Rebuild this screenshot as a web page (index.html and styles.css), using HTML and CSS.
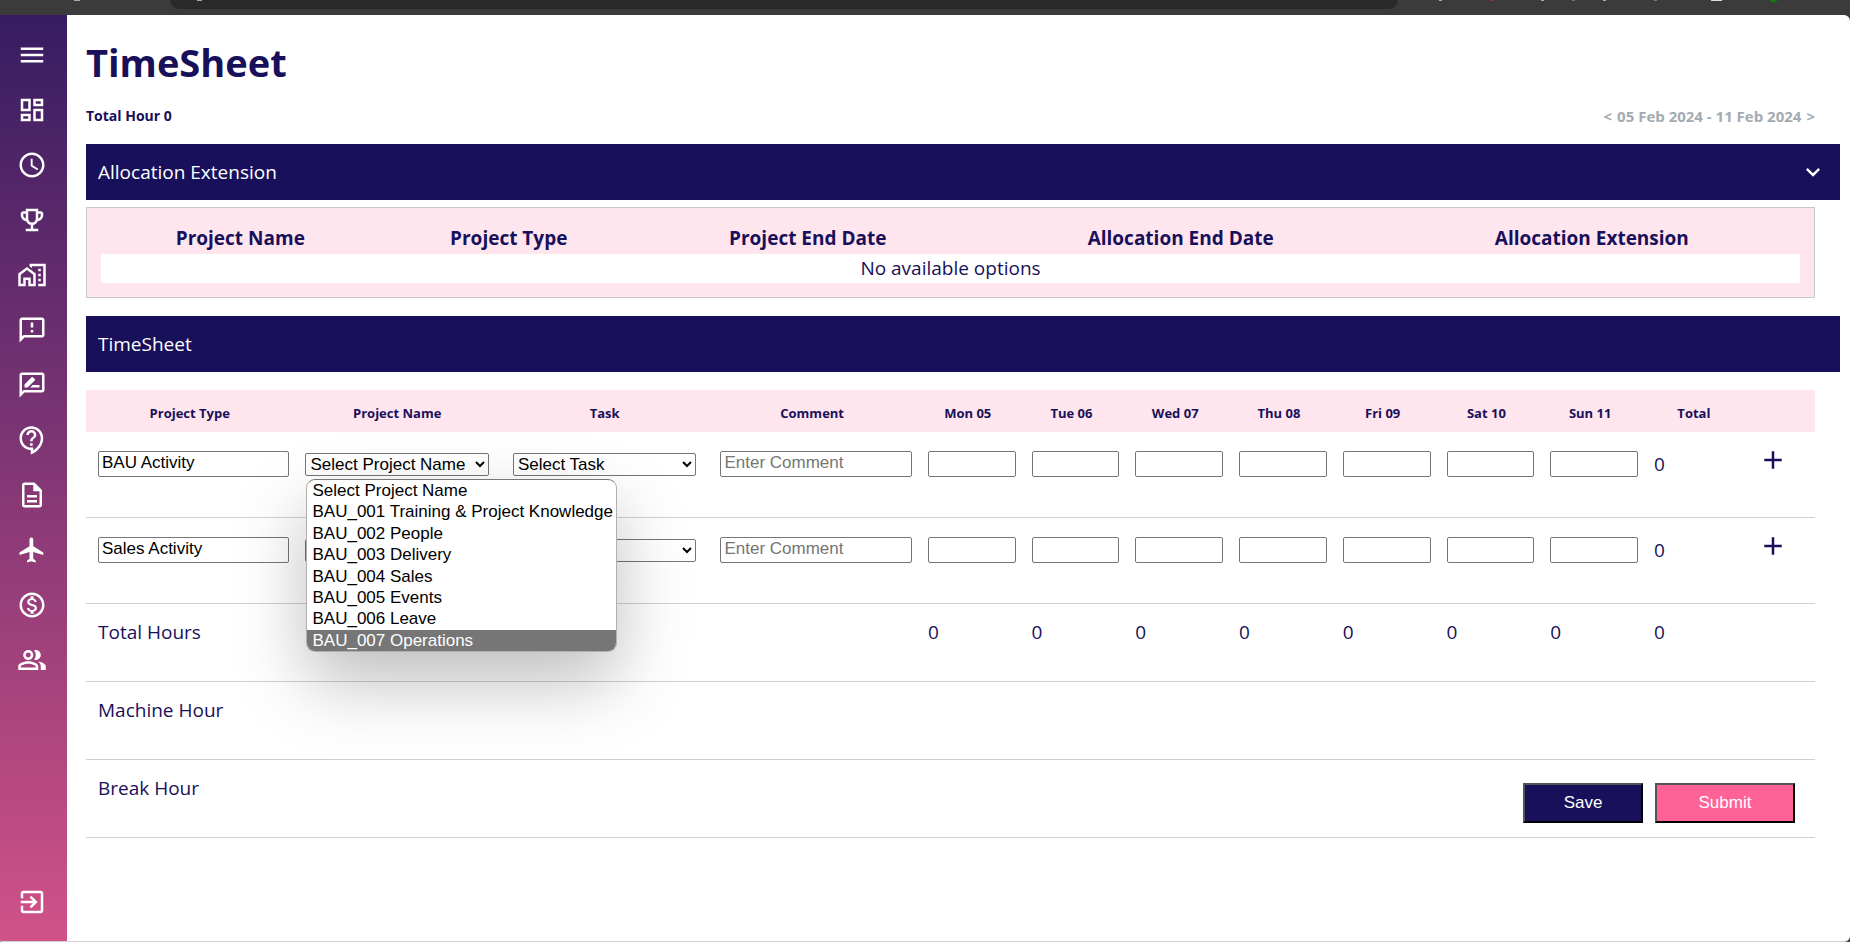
FILE: index.html
```html
<!DOCTYPE html>
<html lang="en">
<head>
<meta charset="utf-8">
<title>TimeSheet</title>
<link rel="stylesheet" href="styles.css">
</head>
<body>
<div class="chrome"><i class="tool"></i><div class="chrome-field"><i></i></div><div class="chrome-icons"><i></i><i class="red"></i><i></i><i class="dim"></i><i></i><i class="dim"></i><i class="wide"></i><i class="green"></i></div></div>
<div class="app">
  <nav class="sidebar" aria-label="Main">
    <button class="nav-item" aria-label="Menu"><svg class="icon" viewBox="0 0 24 24"><path d="M3 18h18v-2H3v2zm0-5h18v-2H3v2zm0-7v2h18V6H3z"/></svg></button>
    <a class="nav-item" href="#" aria-label="Dashboard"><svg class="icon" viewBox="0 0 24 24"><path d="M19 5v2h-4V5h4M9 5v6H5V5h4m10 8v6h-4v-6h4M9 17v2H5v-2h4M21 3h-8v6h8V3zM11 3H3v10h8V3zm10 8h-8v10h8V11zm-10 4H3v6h8v-6z"/></svg></a>
    <a class="nav-item" href="#" aria-label="Timesheet"><svg class="icon" viewBox="0 0 24 24"><path d="M11.99 2C6.47 2 2 6.48 2 12s4.47 10 9.99 10C17.52 22 22 17.52 22 12S17.52 2 11.99 2zM12 20c-4.42 0-8-3.58-8-8s3.58-8 8-8 8 3.58 8 8-3.58 8-8 8zm.5-13H11v6l5.25 3.15.75-1.23-4.5-2.67z"/></svg></a>
    <a class="nav-item" href="#" aria-label="Awards"><svg class="icon" viewBox="0 0 24 24"><path d="M19 5h-2V3H7v2H5c-1.1 0-2 .9-2 2v1c0 2.55 1.92 4.63 4.39 4.94.63 1.5 1.98 2.63 3.61 2.96V19H7v2h10v-2h-4v-3.1c1.63-.33 2.98-1.46 3.61-2.96C19.08 12.63 21 10.55 21 8V7c0-1.1-.9-2-2-2zM5 8V7h2v3.82C5.84 10.4 5 9.3 5 8zm7 6c-1.65 0-3-1.35-3-3V5h6v6c0 1.65-1.35 3-3 3zm7-6c0 1.3-.84 2.4-2 2.82V7h2v1z"/></svg></a>
    <a class="nav-item" href="#" aria-label="Work from home"><svg class="icon wide" viewBox="0 0 24 24"><path d="M17 11h2v2h-2zM17 15h2v2h-2zM17 7h2v2h-2z"/><path d="M8 5.5l-7 5.25V21h6v-5h2v5h6V10.75L8 5.5zM13 19h-2v-5H5v5H3v-7.25L8 8l5 3.75V19z"/><path d="M10 3v1.97l2 1.5V5h9v14h-4v2h6V3z"/></svg></a>
    <a class="nav-item" href="#" aria-label="Feedback"><svg class="icon" viewBox="0 0 24 24"><path d="M20 2H4c-1.1 0-1.99.9-1.99 2L2 22l4-4h14c1.1 0 2-.9 2-2V4c0-1.1-.9-2-2-2zm0 14H5.17L4 17.17V4h16v12zm-9-4h2v2h-2zm0-6h2v4h-2z"/></svg></a>
    <a class="nav-item" href="#" aria-label="Reviews"><svg class="icon" viewBox="0 0 24 24"><path d="M20 2H4c-1.1 0-1.99.9-1.99 2L2 22l4-4h14c1.1 0 2-.9 2-2V4c0-1.1-.9-2-2-2zm0 14H5.17L4 17.17V4h16v12zM10.5 14H18v-2h-5.5zM14.36 8.13c.2-.2.2-.51 0-.71l-1.77-1.77c-.2-.2-.51-.2-.71 0L6 11.53V14h2.47l5.89-5.87z"/></svg></a>
    <a class="nav-item" href="#" aria-label="Help"><svg class="icon" viewBox="0 0 24 24"><path d="M11 23.59v-3.6c-5.01-.26-9-4.42-9-9.49C2 5.26 6.26 1 11.5 1S21 5.26 21 10.5c0 4.95-3.44 9.93-8.57 12.4l-1.43.69zM11.5 3C7.36 3 4 6.36 4 10.5S7.36 18 11.5 18H13v2.3c3.64-2.3 6-6.08 6-9.8C19 6.36 15.64 3 11.5 3zm-1 11.5h2v2h-2zm2-1.500h-2c0-3.250 3-3 3-5 0-1.100-.9-2-2-2s-2 .9-2 2h-2c0-2.210 1.790-4 4-4s4 1.790 4 4c0 2.500-3 2.750-3 5z"/></svg></a>
    <a class="nav-item" href="#" aria-label="Documents"><svg class="icon" viewBox="0 0 24 24"><path d="M8 16h8v2H8zm0-4h8v2H8zm6-10H6c-1.100 0-2 .9-2 2v16c0 1.100.89 2 1.990 2H18c1.100 0 2-.9 2-2V8l-6-6zm4 18H6V4h7v5h5v11z"/></svg></a>
    <a class="nav-item" href="#" aria-label="Travel"><svg class="icon" viewBox="0 0 24 24"><path d="M21 16v-2l-8-5V3.500c0-.83-.67-1.500-1.500-1.500S10 2.670 10 3.500V9l-8 5v2l8-2.500V19l-2 1.500V22l3.500-1 3.500 1v-1.500L13 19v-5.500l8 2.500z"/></svg></a>
    <a class="nav-item" href="#" aria-label="Finance"><svg class="icon" viewBox="0 0 24 24"><path d="M12 2C6.480 2 2 6.480 2 12s4.480 10 10 10 10-4.480 10-10S17.520 2 12 2zm0 18c-4.410 0-8-3.590-8-8s3.590-8 8-8 8 3.590 8 8-3.590 8-8 8zm.31-8.860c-1.770-.45-2.340-.94-2.340-1.670 0-.84.79-1.430 2.100-1.430 1.380 0 1.900.66 1.940 1.640h1.710c-.05-1.340-.87-2.570-2.490-2.970V5H10.900v1.690c-1.510.32-2.720 1.300-2.720 2.810 0 1.790 1.490 2.690 3.660 3.210 1.950.46 2.340 1.150 2.340 1.870 0 .53-.39 1.390-2.100 1.390-1.600 0-2.230-.72-2.320-1.640H8.040c.1 1.700 1.360 2.660 2.860 2.970V19h2.340v-1.670c1.520-.29 2.720-1.160 2.730-2.770-.01-2.200-1.900-2.960-3.660-3.420z"/></svg></a>
    <a class="nav-item" href="#" aria-label="People"><svg class="icon" viewBox="0 0 24 24"><path d="M16.670 13.130C18.040 14.060 19 15.320 19 17v3h4v-3c0-2.180-3.570-3.470-6.330-3.870zM15 12c2.210 0 4-1.790 4-4s-1.790-4-4-4c-.47 0-.91.1-1.330.24C14.500 5.270 15 6.580 15 8s-.5 2.730-1.330 3.760c.42.14.86.24 1.330.24zM9 12c2.210 0 4-1.790 4-4s-1.790-4-4-4-4 1.790-4 4 1.790 4 4 4zm0-6c1.100 0 2 .9 2 2s-.9 2-2 2-2-.9-2-2 .9-2 2-2zM9 13c-2.670 0-8 1.340-8 4v3h16v-3c0-2.660-5.330-4-8-4zm6 5H3v-.99C3.200 16.290 6.300 15 9 15s5.800 1.290 6 2v1z"/></svg></a>
    <a class="nav-item nav-exit" href="#" aria-label="Log out"><svg class="icon" viewBox="0 0 24 24"><path d="M10.090 15.590 11.500 17l5-5-5-5-1.410 1.410L12.670 11H3v2h9.670l-2.580 2.590zM19 3H5c-1.110 0-2 .9-2 2v4h2V5h14v14H5v-4H3v4c0 1.100.89 2 2 2h14c1.100 0 2-.9 2-2V5c0-1.100-.9-2-2-2z"/></svg></a>
  </nav>

  <main class="main">
    <h1 class="title">TimeSheet</h1>
    <div class="summary">
      <span>Total Hour 0</span>
      <div class="week"><button aria-label="Previous week">&lt;</button><span>05 Feb 2024 - 11 Feb 2024</span><button aria-label="Next week">&gt;</button></div>
    </div>

    <h2 class="bar">Allocation Extension
      <button class="bar-toggle" aria-label="Collapse"><svg viewBox="0 0 24 24"><path d="M7.410 8.590 12 13.170l4.590-4.580L18 10l-6 6-6-6z"/></svg></button>
    </h2>
    <div class="panel">
      <table class="alloc">
        <colgroup><col class="a1"><col class="a2"><col class="a3"><col class="a4"><col class="a5"></colgroup>
        <thead><tr><th>Project Name</th><th>Project Type</th><th>Project End Date</th><th>Allocation End Date</th><th>Allocation Extension</th></tr></thead>
        <tbody><tr><td colspan="5">No available options</td></tr></tbody>
      </table>
    </div>

    <h2 class="bar">TimeSheet</h2>
    <table class="sheet">
      <colgroup><col class="w2" span="4"><col class="w1" span="8"><col></colgroup>
      <thead>
        <tr><th>Project Type</th><th>Project Name</th><th>Task</th><th>Comment</th><th>Mon 05</th><th>Tue 06</th><th>Wed 07</th><th>Thu 08</th><th>Fri 09</th><th>Sat 10</th><th>Sun 11</th><th>Total</th><th></th></tr>
      </thead>
      <tbody>
        <tr class="entry">
          <td><input aria-label="Project type" value="BAU Activity"></td>
          <td>
            <div class="picker">
              <select aria-label="Project name"><option>Select Project Name</option></select>
              <ul class="options" role="listbox" aria-label="Project names">
                <li role="option">Select Project Name</li>
                <li role="option">BAU_001 Training &amp; Project Knowledge</li>
                <li role="option">BAU_002 People</li>
                <li role="option">BAU_003 Delivery</li>
                <li role="option">BAU_004 Sales</li>
                <li role="option">BAU_005 Events</li>
                <li role="option">BAU_006 Leave</li>
                <li role="option" class="active" aria-selected="true">BAU_007 Operations</li>
              </ul>
            </div>
          </td>
          <td><select aria-label="Task"><option>Select Task</option></select></td>
          <td><input aria-label="Comment" placeholder="Enter Comment"></td>
          <td><input aria-label="Mon 05"></td><td><input aria-label="Tue 06"></td><td><input aria-label="Wed 07"></td><td><input aria-label="Thu 08"></td><td><input aria-label="Fri 09"></td><td><input aria-label="Sat 10"></td><td><input aria-label="Sun 11"></td>
          <td>0</td>
          <td><button class="add" aria-label="Add row"><svg viewBox="0 0 24 24"><path d="M19 13h-6v6h-2v-6H5v-2h6V5h2v6h6v2z"/></svg></button></td>
        </tr>
        <tr class="entry">
          <td><input aria-label="Project type" value="Sales Activity"></td>
          <td><select aria-label="Project name"><option>Select Project Name</option></select></td>
          <td><select aria-label="Task"><option aria-label="Select Task"></option></select></td>
          <td><input aria-label="Comment" placeholder="Enter Comment"></td>
          <td><input aria-label="Mon 05"></td><td><input aria-label="Tue 06"></td><td><input aria-label="Wed 07"></td><td><input aria-label="Thu 08"></td><td><input aria-label="Fri 09"></td><td><input aria-label="Sat 10"></td><td><input aria-label="Sun 11"></td>
          <td>0</td>
          <td><button class="add" aria-label="Add row"><svg viewBox="0 0 24 24"><path d="M19 13h-6v6h-2v-6H5v-2h6V5h2v6h6v2z"/></svg></button></td>
        </tr>
        <tr><td colspan="4">Total Hours</td><td>0</td><td>0</td><td>0</td><td>0</td><td>0</td><td>0</td><td>0</td><td>0</td><td></td></tr>
        <tr><td colspan="13">Machine Hour</td></tr>
        <tr><td colspan="4">Break Hour</td><td class="actions-cell" colspan="9"><div class="actions"><button class="save">Save</button><button class="submit">Submit</button></div></td></tr>
      </tbody>
    </table>
  </main>
</div>
</body>
</html>
```
FILE: styles.css
```css
* { box-sizing: border-box; }
body {
  margin: 0;
  min-height: 100vh;
  display: flex;
  flex-direction: column;
  background: #3b3b3b;
  color: #18105b;
  font: 19px/28px "Open Sans", "Noto Sans", sans-serif;
}
button { font: inherit; color: inherit; background: none; border: 0; padding: 0; cursor: pointer; }

.chrome { height: 15px; display: flex; align-items: flex-start; padding-left: 74px; overflow: hidden; }
.chrome i { flex: none; width: 3px; height: 1px; background: #aaa; }
.chrome .tool { width: 6px; margin-right: 90px; }
.chrome-field { flex: 0 1 1228px; height: 9px; padding-left: 27px; background: #2a2a2a; border-radius: 0 0 18px 18px; }
.chrome-field i { display: block; width: 5px; }
.chrome-icons { display: flex; align-items: flex-start; gap: 48px; margin-left: 41px; }
.chrome-icons .red { background: #a33; }
.chrome-icons .dim { background: #777; margin: 0 -20px; }
.chrome-icons .dim + i + .dim { margin: 0; }
.chrome-icons .wide { width: 11px; background: #ddd; margin-left: 6px; }
.chrome-icons .green { width: 7px; height: 2px; background: #107c10; border-radius: 0 0 4px 4px; }

.app { flex: 1; display: flex; background: #fff; border-radius: 0 6px 6px 2px; overflow: hidden; border-bottom: 1px solid #d0d0d0; }
.sidebar {
  flex: 0 0 67px;
  display: flex;
  flex-direction: column;
  align-items: center;
  gap: 25px;
  padding: 25px 3px 24px 0;
  background: linear-gradient(#371c62, #d05288);
}
.nav-item { display: block; height: 30px; }
.nav-exit { margin-top: auto; }
.icon { display: block; width: 30px; height: 30px; fill: #fff; }

.main { flex: 1; min-width: 0; padding: 19px 10px 0 19px; }
.title { margin: 0 0 12px; font-size: 38px; line-height: 56px; font-weight: 700; }
.summary { display: flex; justify-content: space-between; margin: 0 25px 14px 0; font-size: 14px; line-height: 28px; font-weight: 700; }
.week { display: flex; gap: 5px; color: #a3abb2; font-size: 15px; }
.bar {
  display: flex;
  justify-content: space-between;
  align-items: center;
  margin: 0;
  padding: 14px 13px 14px 12px;
  background: #18105b;
  color: #fff;
  font-size: 19px;
  font-weight: 400;
}
.bar-toggle svg { display: block; width: 28px; height: 28px; fill: #fff; }
.panel { margin: 7px 25px 18px 0; padding: 14px; border: 1px solid #c8c8c8; background: #ffe5ed; }
.alloc { width: 100%; border-collapse: collapse; table-layout: fixed; text-align: center; }
.alloc th { padding: 2px 0; font-weight: 700; }
.alloc td { padding: 0 0 1px; background: #fff; }
.a1 { width: 16.4%; }
.a2 { width: 15.2%; }
.a3 { width: 20%; }
.a4 { width: 23.9%; }

.sheet { width: calc(100% - 25px); margin-top: 18px; border-collapse: collapse; table-layout: fixed; }
.w2 { width: 12%; }
.w1 { width: 6%; }
.sheet th { padding: 9px 12px 5px; background: #ffe5ed; font-size: 13px; font-weight: 700; }
.sheet td { padding: 14px 12px 35px; vertical-align: top; border-bottom: 1px solid #d0d0d0; }
.sheet .entry td { padding: 18px 12px 39px; }
.sheet input, .sheet select { display: block; width: 100%; border: 1px solid #767676; border-radius: 2px; background-color: #fff; color: #000; font: 17px "Liberation Sans", Arial, sans-serif; }
.sheet input { box-sizing: content-box; height: 20px; padding: 1px 3px 3px; margin-top: 1px; }
.sheet input::placeholder { color: #757575; }
.sheet select { height: 23px; margin-top: 3px; }
.add { display: block; margin-top: -5px; }
.add svg { display: block; width: 30px; height: 30px; fill: #18105b; }

.picker { position: relative; }
.options {
  position: absolute;
  top: 26px;
  left: 1px;
  display: grid;
  min-height: 173px;
  margin: 0;
  padding: 0;
  list-style: none;
  white-space: nowrap;
  background: #fff;
  border: 1px solid #b0b0b0;
  border-top-color: #767676;
  border-radius: 9px;
  overflow: hidden;
  color: #000;
  font: 17px/21px "Liberation Sans", Arial, sans-serif;
  box-shadow: 0 30px 70px rgba(0, 0, 0, .26);
}
.options li { padding: 0 3px 0 5px; }
.options .active { background: #767676; color: #fff; }

.sheet .actions-cell { padding: 23px 20px 14px; }
.actions { display: flex; justify-content: flex-end; gap: 12px; }
.actions button { height: 40px; border: 2px outset #000; color: #fff; font: 17px "Liberation Sans", Arial, sans-serif; }
.save { width: 120px; background: #18105b; }
.submit { width: 140px; background: #ff6296; }
```
